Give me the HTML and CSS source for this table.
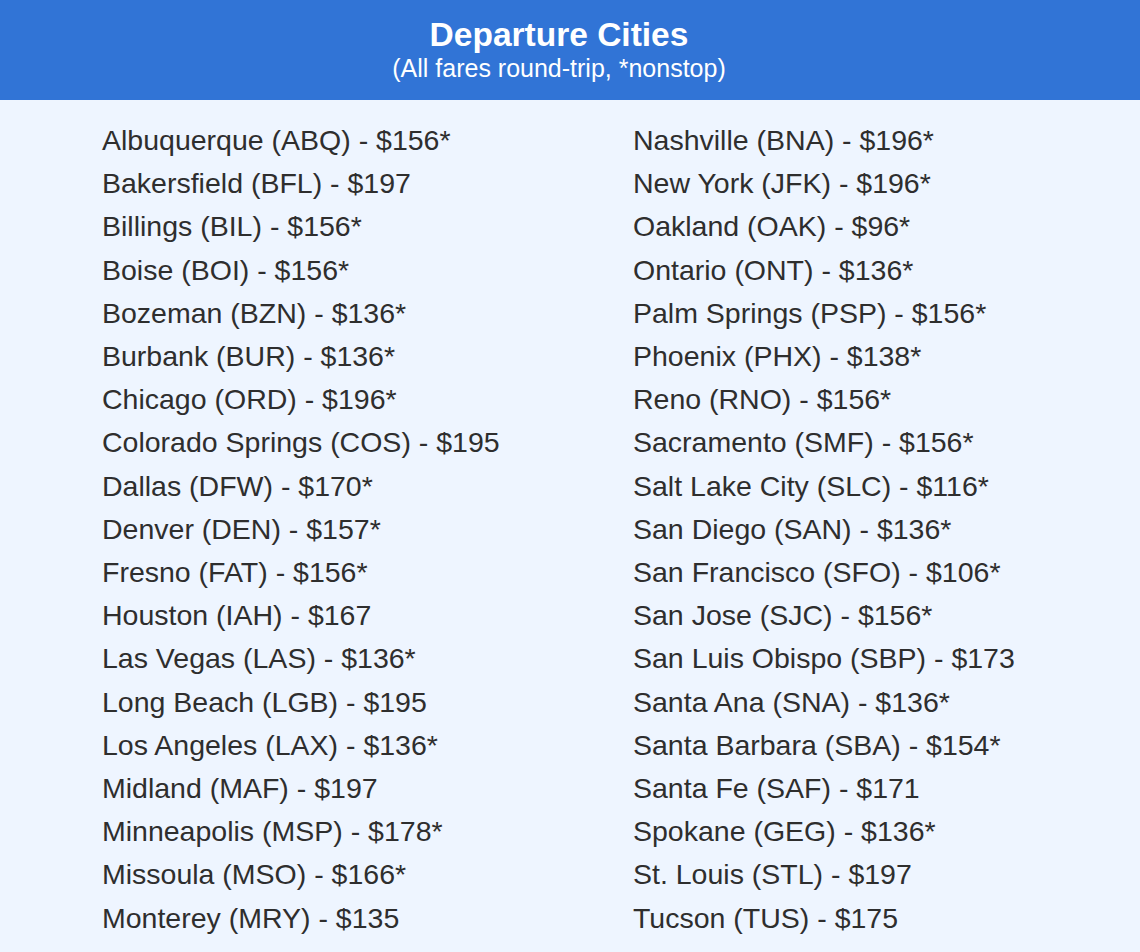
FILE: index.html
```html
<!DOCTYPE html>
<html>
<head>
<meta charset="utf-8">
<link rel="stylesheet" href="styles.css">
</head>
<body>
<div class="card">
  <header class="head">
    <h1 class="title">Departure Cities</h1>
    <p class="sub">(All fares round-trip, *nonstop)</p>
  </header>
  <div class="cols">
    <ul class="list">
      <li>Albuquerque (ABQ) - $156*</li>
      <li>Bakersfield (BFL) - $197</li>
      <li>Billings (BIL) - $156*</li>
      <li>Boise (BOI) - $156*</li>
      <li>Bozeman (BZN) - $136*</li>
      <li>Burbank (BUR) - $136*</li>
      <li>Chicago (ORD) - $196*</li>
      <li>Colorado Springs (COS) - $195</li>
      <li>Dallas (DFW) - $170*</li>
      <li>Denver (DEN) - $157*</li>
      <li>Fresno (FAT) - $156*</li>
      <li>Houston (IAH) - $167</li>
      <li>Las Vegas (LAS) - $136*</li>
      <li>Long Beach (LGB) - $195</li>
      <li>Los Angeles (LAX) - $136*</li>
      <li>Midland (MAF) - $197</li>
      <li>Minneapolis (MSP) - $178*</li>
      <li>Missoula (MSO) - $166*</li>
      <li>Monterey (MRY) - $135</li>
    </ul>
    <ul class="list">
      <li>Nashville (BNA) - $196*</li>
      <li>New York (JFK) - $196*</li>
      <li>Oakland (OAK) - $96*</li>
      <li>Ontario (ONT) - $136*</li>
      <li>Palm Springs (PSP) - $156*</li>
      <li>Phoenix (PHX) - $138*</li>
      <li>Reno (RNO) - $156*</li>
      <li>Sacramento (SMF) - $156*</li>
      <li>Salt Lake City (SLC) - $116*</li>
      <li>San Diego (SAN) - $136*</li>
      <li>San Francisco (SFO) - $106*</li>
      <li>San Jose (SJC) - $156*</li>
      <li>San Luis Obispo (SBP) - $173</li>
      <li>Santa Ana (SNA) - $136*</li>
      <li>Santa Barbara (SBA) - $154*</li>
      <li>Santa Fe (SAF) - $171</li>
      <li>Spokane (GEG) - $136*</li>
      <li>St. Louis (STL) - $197</li>
      <li>Tucson (TUS) - $175</li>
    </ul>
  </div>
</div>
</body>
</html>
```
FILE: styles.css
```css
html, body {
  margin: 0;
  padding: 0;
  background: #eef5ff;
  font-family: "Liberation Sans", Arial, sans-serif;
}
.card {
  width: 1140px;
  min-height: 952px;
  background: #eef5ff;
}
.head {
  background: #3174d6;
  height: 100px;
  box-sizing: border-box;
  padding: 17px 22px 0 0;
  text-align: center;
  color: #ffffff;
}
.title {
  margin: 0;
  font-size: 33.5px;
  line-height: 36px;
  font-weight: bold;
}
.sub {
  margin: 1px 0 0;
  font-size: 25px;
  line-height: 28px;
}
.cols {
  display: grid;
  grid-template-columns: 531px 1fr;
  padding: 19px 0 0 102px;
}
.list {
  list-style: none;
  margin: 0;
  padding: 0;
}
.list li {
  font-size: 28.5px;
  line-height: 43.2px;
  color: #2e2e2e;
  white-space: nowrap;
}
```
